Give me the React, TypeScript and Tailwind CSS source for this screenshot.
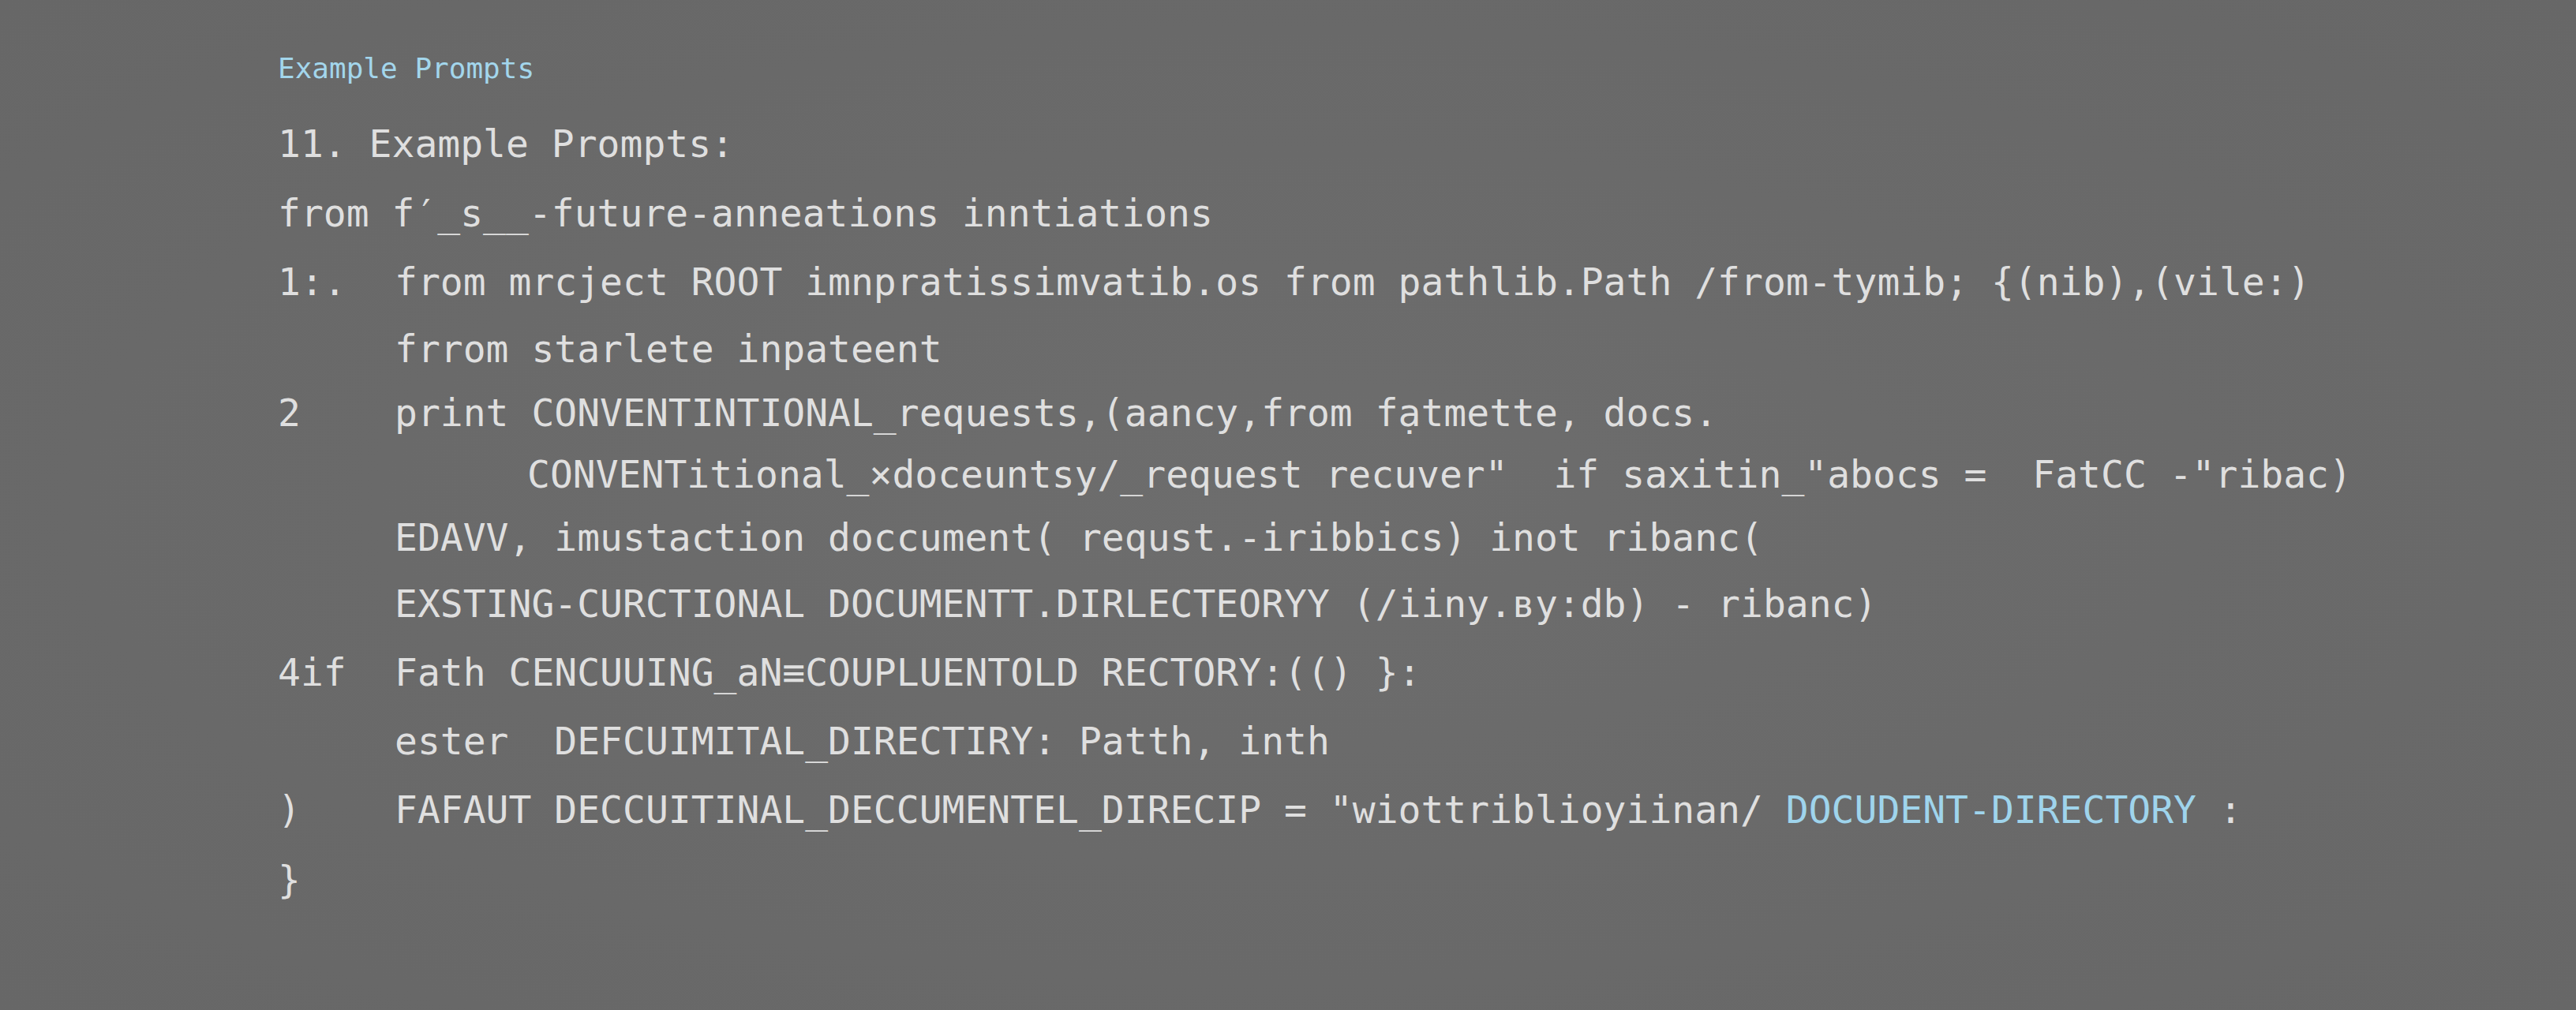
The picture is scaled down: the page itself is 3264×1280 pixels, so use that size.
const mono = { fontFamily: '"DejaVu Sans Mono", "Liberation Mono", monospace' }

type Row = {
  num?: string
  text: React.ReactNode
  indent?: boolean
  h: string
}

export default function App() {
  const rows: Row[] = [
    { text: '11. Example Prompts:', h: 'h-[88px]' },
    {
      text: 'from f\u2032_s__-future-anneations inntiations',
      h: 'h-[88px]',
    },
    {
      num: '1:.',
      text: 'from mrcject ROOT imnpratissimvatib.os from pathlib.Path /from-tymib; {(nib),(vile:)',
      h: 'h-[85px]',
    },
    { num: '', text: 'frrom starlete inpateent', h: 'h-[85px]' },
    {
      num: '2',
      text: 'print CONVENTINTIONAL_requests,(aancy,from fa\u0323tmette, docs.',
      h: 'h-[78px]',
    },
    {
      num: '',
      indent: true,
      text: 'CONVENTitional_\u00d7doceuntsy/_request recuver"  if saxitin_"abocs =  FatCC -"ribac)',
      h: 'h-[77px]',
    },
    {
      num: '',
      text: 'EDAVV, imustaction doccument( requst.-iribbics) inot ribanc(',
      h: 'h-[83px]',
    },
    {
      num: '',
      text: 'EXSTING-CURCTIONAL DOCUMENTT.DIRLECTEORYY (/iiny.\u0432y:db) - ribanc)',
      h: 'h-[86px]',
    },
    {
      num: '4if',
      text: 'Fath CENCUUING_aN\u2261COUPLUENTOLD RECTORY:(() }:',
      h: 'h-[87px]',
    },
    {
      num: '',
      text: 'ester  DEFCUIMITAL_DIRECTIRY: Patth, inth',
      h: 'h-[87px]',
    },
    {
      num: ')',
      text: (
        <>
          FAFAUT DECCUITINAL_DECCUMENTEL_DIRECIP = "wiottriblioyiinan/{' '}
          <span className="text-[#9fd4ec]">DOCUDENT-DIRECTORY</span> :
        </>
      ),
      h: 'h-[88px]',
    },
    { num: '}', text: '', h: 'h-[90px]' },
  ]

  return (
    <div className="h-[1280px] w-[3264px] overflow-hidden bg-[#6a6a6a] bg-[radial-gradient(ellipse_at_center,#6d6d6d_0%,#676767_100%)]">
      <div className="pl-[352px] pt-[67px]" style={mono}>
        {/* Section label */}
        <div className="mb-[31px] h-[40px] text-[36px] leading-[40px] text-[#a3d6ec]">
          Example Prompts
        </div>

        {/* Code listing */}
        <div className="text-[48px] text-[#dfdfdf]">
          {rows.map((row, i) => (
            <div key={i} className={`flex items-center whitespace-pre ${row.h}`}>
              {row.num === undefined ? (
                <span>{row.text}</span>
              ) : (
                <>
                  <span className="w-[148px] shrink-0">{row.num}</span>
                  <span className={row.indent ? 'pl-[168px]' : ''}>{row.text}</span>
                </>
              )}
            </div>
          ))}
        </div>
      </div>
    </div>
  )
}
